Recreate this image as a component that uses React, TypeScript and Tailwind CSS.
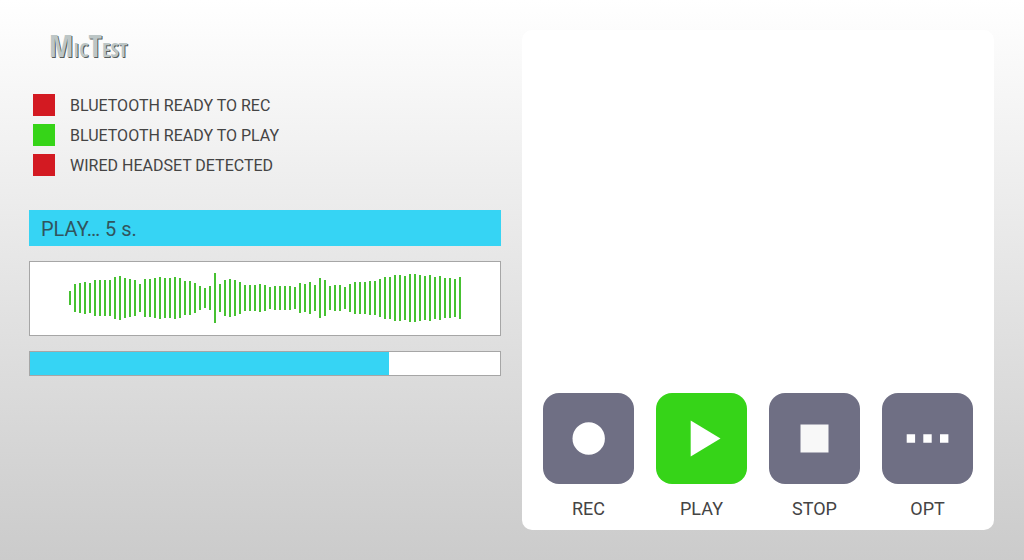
import type { ReactNode } from "react";

const statuses = [
  { label: "BLUETOOTH READY TO REC", active: false },
  { label: "BLUETOOTH READY TO PLAY", active: true },
  { label: "WIRED HEADSET DETECTED", active: false },
];

const levels = [
  14, 28, 30, 32, 30, 36, 36, 36, 36, 42, 44, 40, 38, 36, 28, 38, 38, 40, 42, 40,
  40, 42, 40, 34, 34, 30, 24, 20, 24, 50, 28, 36, 38, 36, 32, 26, 26, 26, 28, 26,
  22, 24, 24, 24, 24, 22, 30, 28, 32, 26, 40, 36, 24, 26, 26, 22, 28, 32, 32, 32,
  34, 34, 38, 42, 42, 46, 46, 44, 48, 48, 46, 44, 46, 42, 44, 40, 40, 38, 42,
];

function Waveform() {
  return (
    <div className="mt-[15px] flex h-[75px] justify-center border border-[#a6a6a6] bg-white pt-[11px]">
      <svg width="392" height="50" viewBox="0 0 392 50" role="img" aria-label="Waveform" shapeRendering="crispEdges">
        {levels.map((level, i) => (
          <rect key={i} x={i * 5} y={25 - level / 2} width="2" height={level} fill="#46c131" />
        ))}
      </svg>
    </div>
  );
}

function ControlButton({ label, active, children }: { label: string; active?: boolean; children: ReactNode }) {
  return (
    <button type="button" className="flex flex-1 flex-col items-center text-lg text-[#444444]">
      <span
        className={`flex aspect-square w-full items-center justify-center rounded-2xl ${
          active ? "bg-[#36d418]" : "bg-[#6f6f84]"
        }`}
      >
        <svg viewBox="0 0 91 91" className="w-full" aria-hidden="true">
          {children}
        </svg>
      </span>
      <span className="mt-[11px] leading-7">{label}</span>
    </button>
  );
}

export default function App() {
  return (
    <main className="grid min-h-screen grid-cols-2 gap-[21px] bg-linear-to-b from-white to-[#cbcbcb] py-[30px] pr-[30px] pl-[29px] font-['Roboto',sans-serif] text-[#444444]">
      <section>
        <h1 className="h-8 pl-5 font-['Open_Sans_Condensed',sans-serif] text-[20px] leading-[30px] font-bold text-[#bcc6c6] [text-shadow:1px_1px_0_#555c5c]">
          <span className="text-[31px]">M</span>IC<span className="text-[31px]">T</span>EST
        </h1>
        <ul className="mt-8 flex flex-col gap-2 pl-1">
          {statuses.map(({ label, active }) => (
            <li key={label} className="flex items-center gap-[15px] text-base">
              <span className={`size-[22px] shrink-0 ${active ? "bg-[#36d418]" : "bg-[#d31a22]"}`} />
              <span className="pt-[2px] leading-5">{label}</span>
            </li>
          ))}
        </ul>
        <p className="mt-[34px] bg-[#36d4f4] px-3 pt-[2px] text-xl leading-[34px] text-[#31545d]" role="status">
          PLAY… 5 s.
        </p>
        <Waveform />
        <div
          className="mt-[15px] h-[25px] border border-[#a6a6a6] bg-white"
          role="progressbar"
          aria-label="Playback"
          aria-valuenow={76}
          aria-valuemin={0}
          aria-valuemax={100}
        >
          <div className="h-full bg-[#36d4f4]" style={{ width: "76.4%" }} />
        </div>
      </section>

      <section className="flex flex-col justify-end rounded-[10px] bg-white px-[21px] pb-[7px]">
        <div className="flex gap-[22px]">
          <ControlButton label="REC">
            <circle cx="45.7" cy="45.5" r="16.2" fill="#fff" />
          </ControlButton>
          <ControlButton label="PLAY" active>
            <path d="M34.7 27.5 64.5 45.4 34.7 63.5Z" fill="#fff" />
          </ControlButton>
          <ControlButton label="STOP">
            <rect x="31.5" y="31.5" width="28" height="28" fill="#f8f8f8" />
          </ControlButton>
          <ControlButton label="OPT">
            <path d="M24.7 41.3h8.4v8.4h-8.4zM41.3 41.3h8.4v8.4h-8.4zM58 41.3h8.4v8.4H58z" fill="#fff" />
          </ControlButton>
        </div>
      </section>
    </main>
  );
}
